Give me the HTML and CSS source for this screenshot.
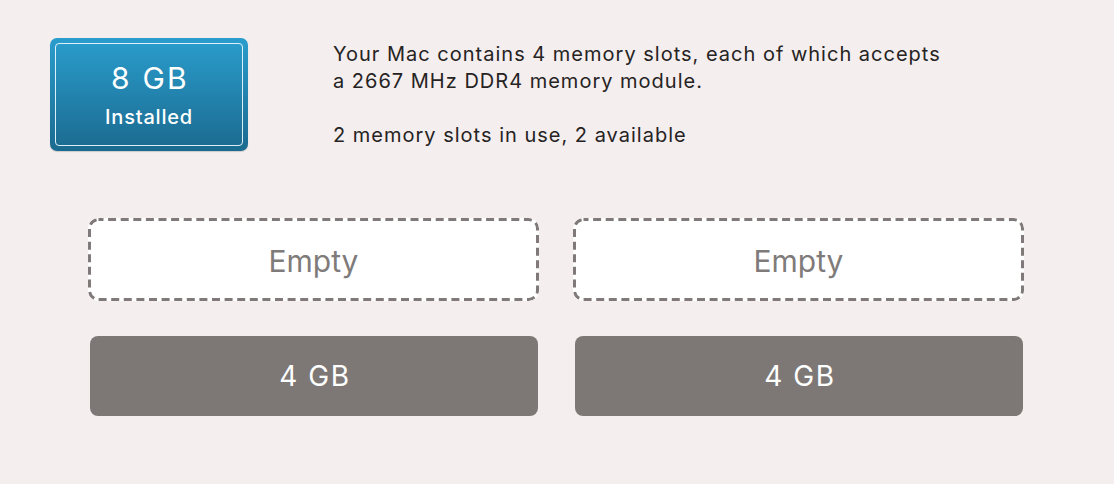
FILE: index.html
```html
<!DOCTYPE html>
<html>
<head>
<meta charset="utf-8">
<link rel="stylesheet" href="styles.css">
</head>
<body>
<div class="page">
  <div class="top">
    <div class="badge">
      <div class="badge-inner">
        <div class="badge-size">8 GB</div>
        <div class="badge-label">Installed</div>
      </div>
    </div>
    <div class="info">
      <p class="info-line">Your Mac contains 4 memory slots, each of which accepts<br>a 2667 MHz DDR4 memory module.</p>
      <p class="info-line usage">2 memory slots in use, 2 available</p>
    </div>
  </div>
  <div class="slots">
    <div class="slot empty">Empty</div>
    <div class="slot empty">Empty</div>
    <div class="slot filled">4 GB</div>
    <div class="slot filled">4 GB</div>
  </div>
</div>
</body>
</html>
```
FILE: styles.css
```css
html, body {
  margin: 0;
  padding: 0;
  background: #f4eeee;
  font-family: Inter, "Noto Sans", "Liberation Sans", sans-serif;
}
.page {
  width: 1114px;
  height: 484px;
  box-sizing: border-box;
  padding: 38px 0 0 0;
}
.top {
  display: flex;
  align-items: flex-start;
}
.badge {
  margin-left: 50px;
  width: 198px;
  height: 113px;
  box-sizing: border-box;
  padding: 5px;
  border-radius: 7px;
  background: linear-gradient(#2a9dcd, #1b6a8f);
  box-shadow: 0 1px 1px rgba(0,0,0,0.15);
}
.badge-inner {
  height: 100%;
  box-sizing: border-box;
  border: 1.5px solid rgba(230,245,252,0.95);
  border-radius: 4px;
  display: flex;
  flex-direction: column;
  align-items: center;
  color: #fff;
}
.badge-size {
  font-size: 30px;
  line-height: 36px;
  margin-top: 15.5px;
  font-weight: 400;
  letter-spacing: 2.2px;
  padding-left: 2px;
}
.badge-label {
  font-size: 20px;
  font-weight: 500;
  line-height: 24px;
  margin-top: 9px;
  letter-spacing: 0.8px;
}
.info {
  margin-left: 85px;
  margin-top: 3px;
  color: #262323;
  font-size: 20px;
  line-height: 27px;
  letter-spacing: 1px;
}
.info-line {
  margin: 0;
}
.usage {
  margin-top: 27px;
}
.slots {
  margin: 67px 0 0 88px;
  display: grid;
  grid-template-columns: 451px 451px;
  grid-template-rows: 83px 80px;
  column-gap: 34px;
  row-gap: 35px;
}
.slot {
  display: flex;
  align-items: center;
  justify-content: center;
  box-sizing: border-box;
}
.empty {
  border-radius: 10px;
  background-color: #fff;
  background-image: url("data:image/svg+xml,%3Csvg xmlns='http://www.w3.org/2000/svg' width='451' height='83'%3E%3Crect x='1.5' y='1.5' width='448' height='80' rx='9' ry='9' fill='none' stroke='%237f7a79' stroke-width='3' stroke-dasharray='8 4.6' stroke-dashoffset='3'/%3E%3C/svg%3E");
  background-repeat: no-repeat;
  color: #7f7b7a;
  font-size: 30px;
  padding-top: 2px;
}
.filled {
  background: #7d7876;
  border-radius: 8px;
  color: #fff;
  font-size: 28px;
  letter-spacing: 1.6px;
  padding-left: 2px;
  margin-left: 2px;
  width: 448px;
}
```
